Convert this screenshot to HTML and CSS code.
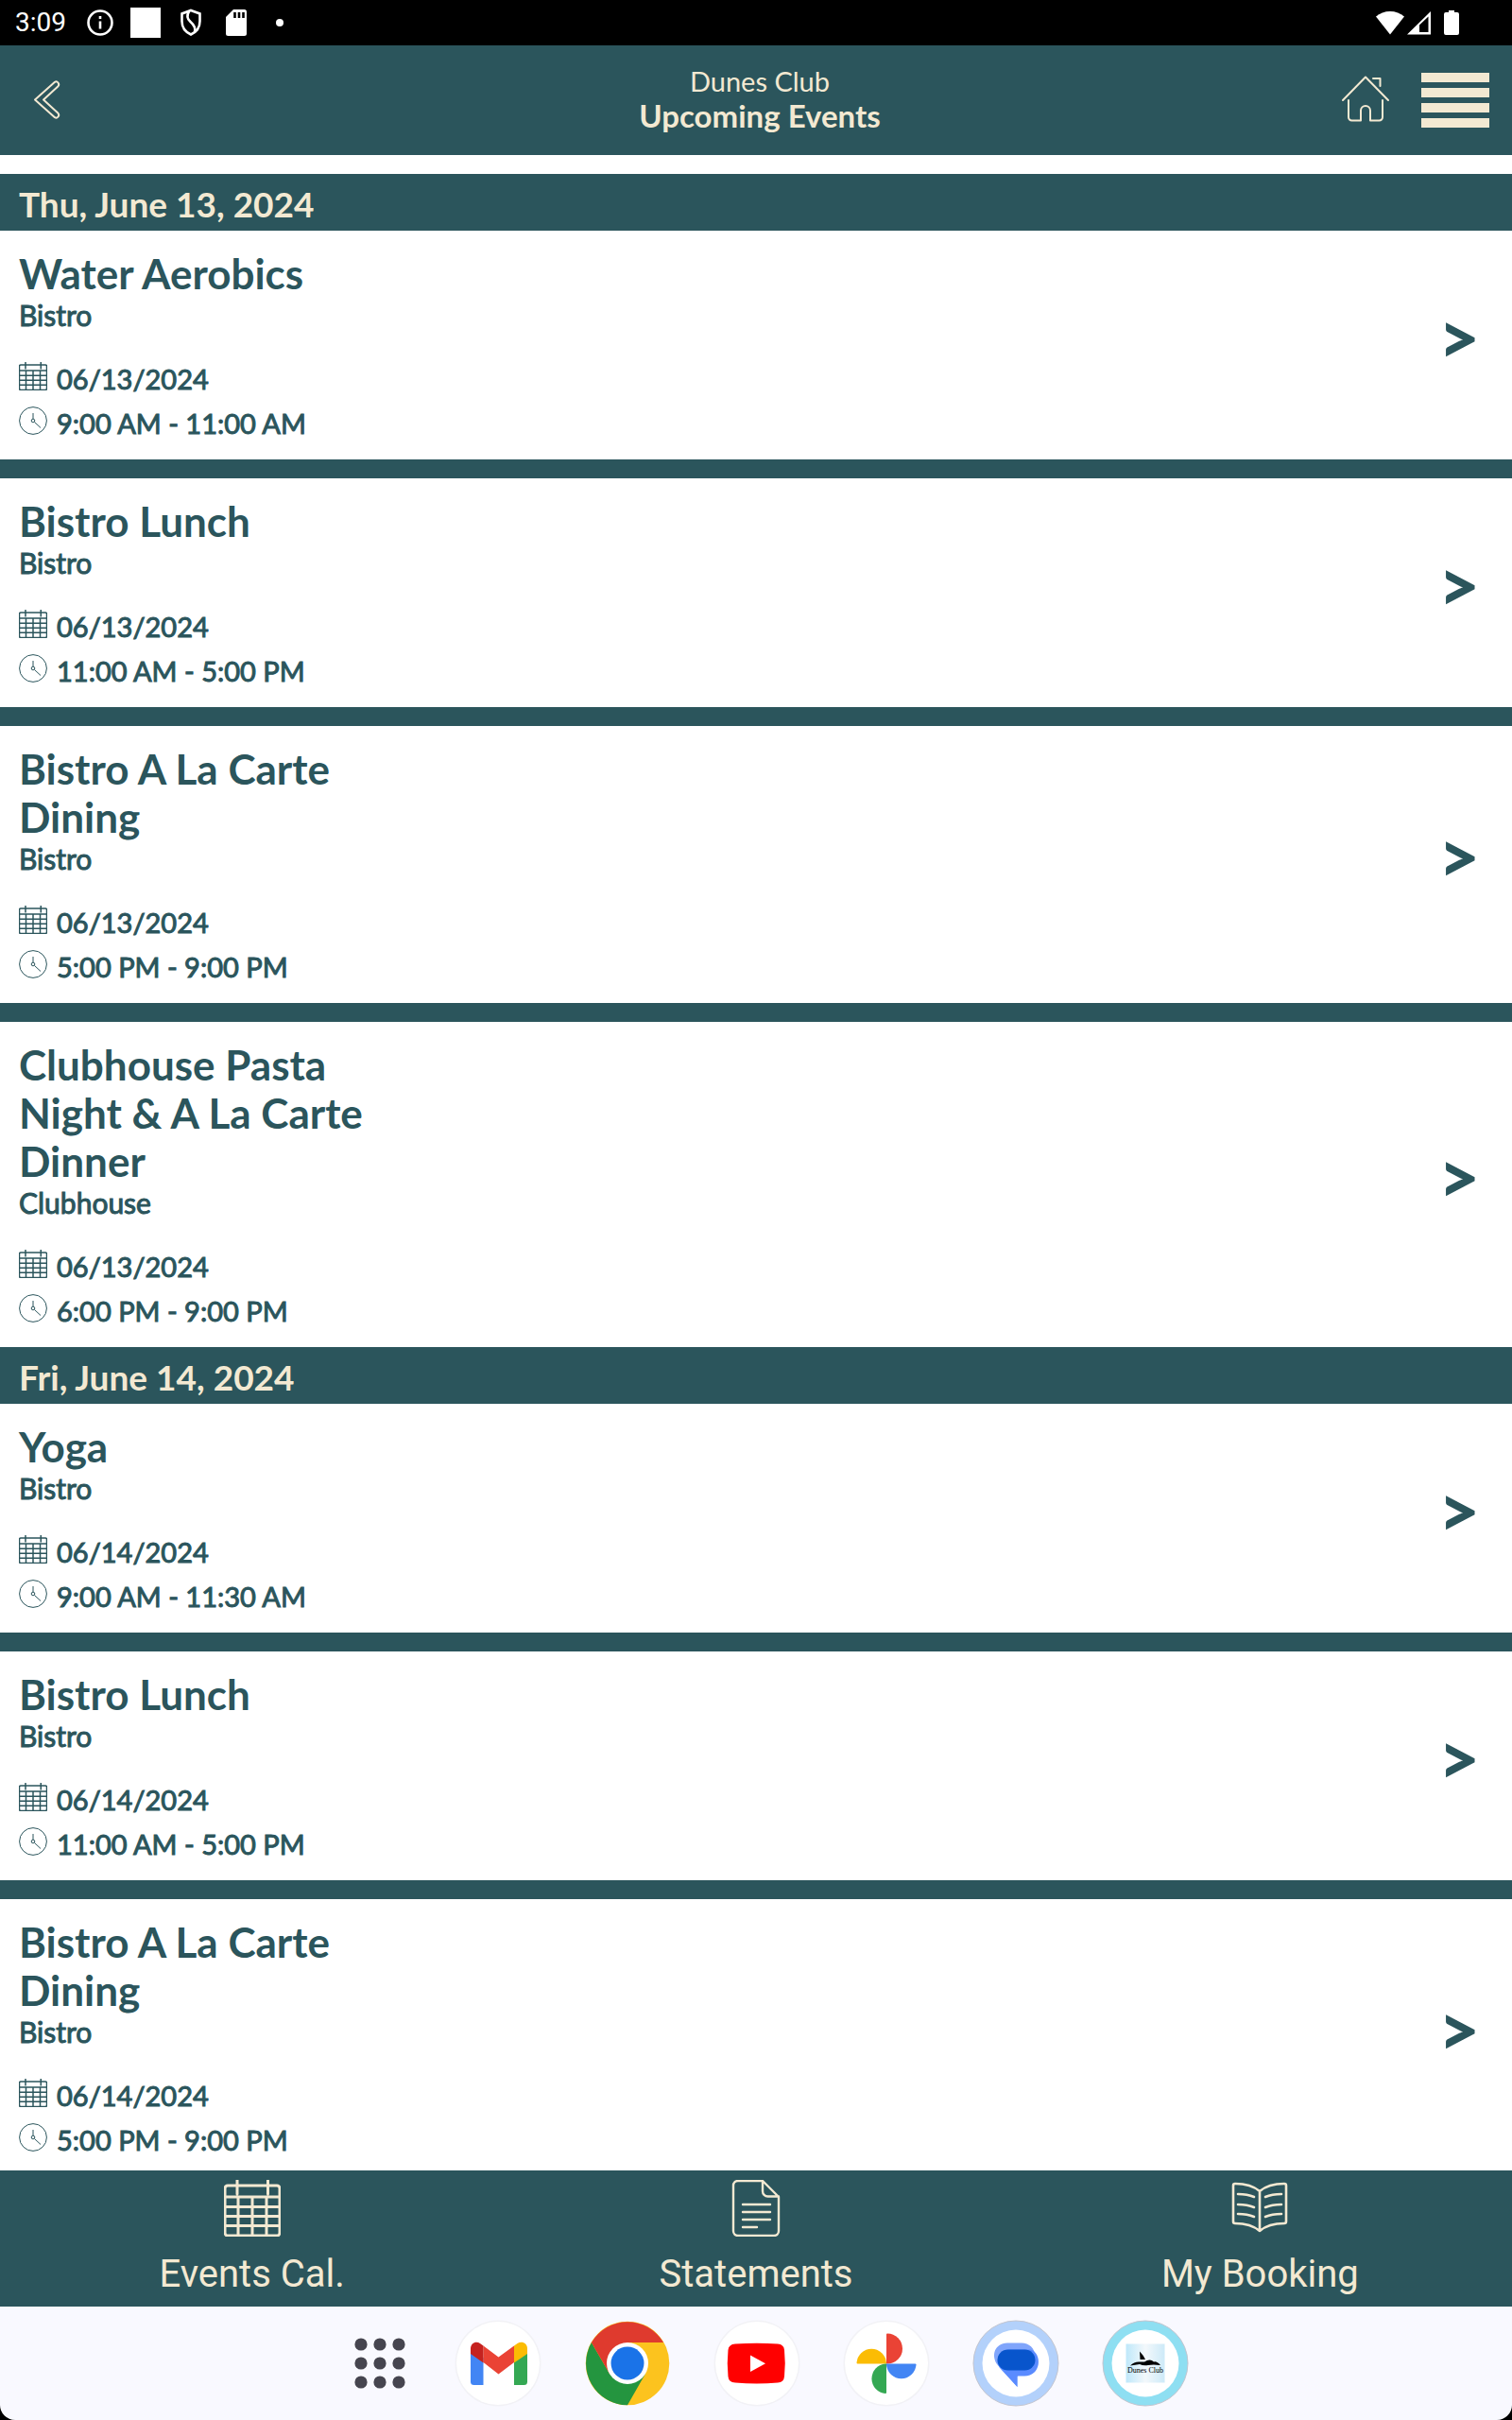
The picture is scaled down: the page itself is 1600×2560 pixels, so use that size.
FILE: index.html
```html
<!DOCTYPE html>
<html lang="en">
<head>
<meta charset="utf-8">
<meta name="viewport" content="width=device-width, initial-scale=1">
<title>Dunes Club - Upcoming Events</title>
<link rel="stylesheet" href="styles.css">
</head>
<body>
<svg class="sprite" aria-hidden="true">
  <symbol id="calendar" viewBox="0 0 60 60">
    <path d="M4 6H56a3 3 0 0 1 3 3V56a3 3 0 0 1-3 3H4a3 3 0 0 1-3-3V9a3 3 0 0 1 3-3zM1 18H59M1 28.500H59M1 38.500H59M1 48.500H59M15 18V59M30 18V59M45 18V59M14 0V15M46.500 0V15"/>
  </symbol>
  <symbol id="clock" viewBox="0 0 30 30">
    <circle cx="15" cy="15" r="14.400"/>
    <circle cx="15" cy="15" r="1.800"/>
    <path d="M15 7v6M16.500 16.500l6.500 6"/>
  </symbol>
</svg>
<div class="app">
  <div class="status">
    <time class="status-time">3:09</time>
    <svg class="status-left" viewBox="0 0 210 32" aria-hidden="true">
      <g fill="none" stroke="#fff" stroke-width="2.600">
        <circle cx="14" cy="16" r="12.500"/>
        <path d="M14 14.500v8M14 9v3"/>
        <path d="M110 3l9.500 3.500v8c0 7-4 11.500-9.500 14-5.500-2.500-9.500-7-9.500-14v-8z"/>
        <path d="M108 4c-3 5-2 8 1.500 11s6 6 4.500 11"/>
      </g>
      <g fill="#fff">
        <path d="M46 0h32v32H46z"/>
        <path d="M155 2h11.500a2.500 2.500 0 0 1 2.500 2.500v23a2.500 2.500 0 0 1-2.500 2.500h-17a2.500 2.500 0 0 1-2.500-2.500V10z"/>
        <circle cx="204" cy="16" r="4"/>
      </g>
      <path d="M156.500 5v6M161 5v6M165.500 5v6" stroke="#000" stroke-width="2.600"/>
    </svg>
    <svg class="status-right" viewBox="0 0 88 32" fill="#fff" aria-hidden="true">
      <path d="M0 9.500C8 2 22 2 30 9.500L15 28.500z"/>
      <path fill-rule="evenodd" d="M33 28.500L58 4V28.500zM46 18.500V26H55.500V9.500z"/>
      <path d="M77 3h6v2h3a2 2 0 0 1 2 2v20a2 2 0 0 1-2 2H74a2 2 0 0 1-2-2V7a2 2 0 0 1 2-2h3z"/>
    </svg>
  </div>

  <header class="header">
    <button class="icon-button back" type="button" aria-label="Back">
      <svg class="back-icon" viewBox="0 0 36 44"><path d="M5 21.500L26 2.800q2-1.200 3.500.7t0 3.700L14 21.500l15.500 14.300q1.500 1.800 0 3.700t-3.500.7z"/></svg>
    </button>
    <div class="heading">
      <p class="club">Dunes Club</p>
      <h1 class="page-title">Upcoming Events</h1>
    </div>
    <div class="header-actions">
      <button class="icon-button" type="button" aria-label="Home">
        <svg class="home-icon" viewBox="0 0 52 52"><path d="M2 26L26 1.500L50 26M8 26V44a3.500 3.500 0 0 0 3.500 3.500H21V37a5 5 0 0 1 10 0V47.500h9.500A3.500 3.500 0 0 0 44 44V26M34 3H41.500V11"/></svg>
      </button>
      <button class="icon-button" type="button" aria-label="Menu">
        <svg class="menu-icon" viewBox="0 0 72 58"><path d="M0 0H72V10H0zM0 16H72V26H0zM0 32H72V42H0zM0 48H72V58H0z"/></svg>
      </button>
    </div>
  </header>

  <main class="schedule">
    <section class="day">
      <h2 class="day-title">Thu, June 13, 2024</h2>
      <a class="event" href="#water-aerobics">
        <div class="event-info">
          <h3 class="event-name">Water Aerobics</h3>
          <p class="venue">Bistro</p>
          <p class="detail"><svg class="detail-icon calendar-icon"><use href="#calendar"/></svg>06/13/2024</p>
          <p class="detail"><svg class="detail-icon"><use href="#clock"/></svg>9:00 AM - 11:00 AM</p>
        </div>
        <span class="arrow">&gt;</span>
      </a>
      <a class="event" href="#bistro-lunch-13">
        <div class="event-info">
          <h3 class="event-name">Bistro Lunch</h3>
          <p class="venue">Bistro</p>
          <p class="detail"><svg class="detail-icon calendar-icon"><use href="#calendar"/></svg>06/13/2024</p>
          <p class="detail"><svg class="detail-icon"><use href="#clock"/></svg>11:00 AM - 5:00 PM</p>
        </div>
        <span class="arrow">&gt;</span>
      </a>
      <a class="event" href="#bistro-dining-13">
        <div class="event-info">
          <h3 class="event-name">Bistro A La Carte Dining</h3>
          <p class="venue">Bistro</p>
          <p class="detail"><svg class="detail-icon calendar-icon"><use href="#calendar"/></svg>06/13/2024</p>
          <p class="detail"><svg class="detail-icon"><use href="#clock"/></svg>5:00 PM - 9:00 PM</p>
        </div>
        <span class="arrow">&gt;</span>
      </a>
      <a class="event" href="#pasta-night">
        <div class="event-info">
          <h3 class="event-name">Clubhouse Pasta Night &amp; A La Carte Dinner</h3>
          <p class="venue">Clubhouse</p>
          <p class="detail"><svg class="detail-icon calendar-icon"><use href="#calendar"/></svg>06/13/2024</p>
          <p class="detail"><svg class="detail-icon"><use href="#clock"/></svg>6:00 PM - 9:00 PM</p>
        </div>
        <span class="arrow">&gt;</span>
      </a>
    </section>
    <section class="day">
      <h2 class="day-title">Fri, June 14, 2024</h2>
      <a class="event" href="#yoga">
        <div class="event-info">
          <h3 class="event-name">Yoga</h3>
          <p class="venue">Bistro</p>
          <p class="detail"><svg class="detail-icon calendar-icon"><use href="#calendar"/></svg>06/14/2024</p>
          <p class="detail"><svg class="detail-icon"><use href="#clock"/></svg>9:00 AM - 11:30 AM</p>
        </div>
        <span class="arrow">&gt;</span>
      </a>
      <a class="event" href="#bistro-lunch-14">
        <div class="event-info">
          <h3 class="event-name">Bistro Lunch</h3>
          <p class="venue">Bistro</p>
          <p class="detail"><svg class="detail-icon calendar-icon"><use href="#calendar"/></svg>06/14/2024</p>
          <p class="detail"><svg class="detail-icon"><use href="#clock"/></svg>11:00 AM - 5:00 PM</p>
        </div>
        <span class="arrow">&gt;</span>
      </a>
      <a class="event" href="#bistro-dining-14">
        <div class="event-info">
          <h3 class="event-name">Bistro A La Carte Dining</h3>
          <p class="venue">Bistro</p>
          <p class="detail"><svg class="detail-icon calendar-icon"><use href="#calendar"/></svg>06/14/2024</p>
          <p class="detail"><svg class="detail-icon"><use href="#clock"/></svg>5:00 PM - 9:00 PM</p>
        </div>
        <span class="arrow">&gt;</span>
      </a>
    </section>
  </main>

  <nav class="tabs" aria-label="Club">
    <a class="tab" href="#calendar-tab">
      <svg class="tab-icon"><use href="#calendar"/></svg>
      Events Cal.
    </a>
    <a class="tab" href="#statements">
      <svg class="tab-icon" viewBox="0 0 60 60"><path stroke-width="2.400" d="M11 1H37L54 18V54a5 5 0 0 1-5 5H11a5 5 0 0 1-5-5V6a5 5 0 0 1 5-5zM37 1V12a5.500 5.500 0 0 0 5.500 5.500H54M16 26H45M16 34H45M16 42H45M16 50H31"/></svg>
      Statements
    </a>
    <a class="tab" href="#my-booking">
      <svg class="tab-icon" viewBox="0 0 60 60"><path stroke-width="2.600" d="M30 12C23 6 13 4 4 4q-2 0-2 2V44q0 2 2 2C14 46 23 48 30 54C37 48 46 46 56 46q2 0 2-2V6q0-2-2-2C47 4 37 6 30 12zV54M7 15q10 0 17 3M7 26q10 0 17 3M7 36q10 0 17 3M53 15q-10 0-17 3M53 26q-10 0-17 3M53 36q-10 0-17 3"/></svg>
      My Booking
    </a>
  </nav>

  <nav class="dock" aria-label="Apps">
    <button class="icon-button all-apps" type="button" aria-label="All apps">
      <svg class="dots-icon" viewBox="0 0 54 54" fill="#46454f"><circle cx="7" cy="7" r="6.600"/><circle cx="27" cy="7" r="6.600"/><circle cx="47" cy="7" r="6.600"/><circle cx="7" cy="27" r="6.600"/><circle cx="27" cy="27" r="6.600"/><circle cx="47" cy="27" r="6.600"/><circle cx="7" cy="47" r="6.600"/><circle cx="27" cy="47" r="6.600"/><circle cx="47" cy="47" r="6.600"/></svg>
    </button>
    <button class="icon-button" type="button" aria-label="Gmail">
      <svg class="app-icon" viewBox="0 0 92 92">
        <circle cx="46" cy="46" r="45.500" fill="#f2f2f6"/><circle cx="46" cy="46" r="44" fill="#fff"/>
        <path d="M17 34V65.500a3.500 3.500 0 0 0 3.500 3.500H30.500V40z" fill="#4285f4"/>
        <path d="M77 34V65.500a3.500 3.500 0 0 1-3.500 3.500H63V40z" fill="#34a853"/>
        <path d="M30.500 27.500L46.500 39.500L63 27.500V45L46.500 57.500L30.500 45z" fill="#ea4335"/>
        <path d="M30.500 27.500L27 25C23 22 17 24.500 17 30.500V36L30.500 45.500z" fill="#c5221f"/>
        <path d="M63 27.500L66.500 25C71 22 77 24.500 77 30.500V36L63 45.500z" fill="#fbbc04"/>
      </svg>
    </button>
    <button class="icon-button" type="button" aria-label="Chrome">
      <svg class="app-icon" viewBox="-2 -2 92 92">
        <circle cx="44" cy="44" r="44.300" fill="#fcc31e"/>
        <path d="M5.900 22A44.300 44.300 0 0 0 44 88.300L63 55L44 44L25 55z" fill="#24953f"/>
        <path d="M5.900 22A44.300 44.300 0 0 1 82.100 22H44V44L25 55z" fill="#df3a2e"/>
        <circle cx="44" cy="44" r="22" fill="#fff"/><circle cx="44" cy="44" r="17.500" fill="#1a73e8"/>
      </svg>
    </button>
    <button class="icon-button" type="button" aria-label="YouTube">
      <svg class="app-icon" viewBox="0 0 92 92">
        <circle cx="46" cy="46" r="45.500" fill="#f2f2f6"/><circle cx="46" cy="46" r="44" fill="#fff"/>
        <path d="M23 25.500Q46 24 68 25.500Q74.500 26 75 32Q76.500 46 75 60Q74.500 66 68 66.500Q46 68.500 23 66.500Q16 66 15.500 60Q14 46 15.500 32Q16 26 23 25.500z" fill="#f00"/>
        <path d="M39 37.500L55 46.200L39 55z" fill="#fff"/>
      </svg>
    </button>
    <button class="icon-button" type="button" aria-label="Photos">
      <svg class="app-icon" viewBox="0 0 92 92">
        <circle cx="46" cy="46" r="45.500" fill="#f2f2f6"/><circle cx="46" cy="46" r="44" fill="#fff"/>
        <path d="M46 46.500V15.500q0-1 1-1A16 16 0 0 1 47 46.500z" fill="#ea4335"/>
        <path d="M46 46.500H15.500q-1 0-1-1A15.800 16 0 0 1 46 45.500z" fill="#fbbc04"/>
        <path d="M46 46.500H76.500q1 0 1 1A15.800 16 0 0 1 46 47.500z" fill="#4285f4"/>
        <path d="M46 46.500V77q0 1-1 1A15.800 15.800 0 0 1 45 46.500z" fill="#34a853"/>
      </svg>
    </button>
    <button class="icon-button" type="button" aria-label="Messages">
      <svg class="app-icon" viewBox="0 0 92 92">
        <circle cx="46" cy="46" r="45" fill="#b3d1fb" stroke="#c3c5cf"/><circle cx="46" cy="46" r="35.500" fill="#fff"/>
        <path d="M37 24.500H52C60 24.500 66 30 66.500 38.500L47.500 60V71L26 47C20 38 23 25 37 24.500z" fill="#80a5fb"/>
        <path d="M40 31.500H62C74 36 73 59.500 55 59.500H47.500V71L30 52C23 44 28 31.500 40 31.500z" fill="#5a8bff"/>
        <rect x="26.500" y="31.500" width="40" height="22" rx="11" fill="#0855cc"/>
      </svg>
    </button>
    <button class="icon-button" type="button" aria-label="Dunes Club">
      <svg class="app-icon" viewBox="0 0 92 92">
        <defs><linearGradient id="sky"><stop offset="0" stop-color="#bfe8fa"/><stop offset=".5" stop-color="#f3f8fb"/><stop offset="1" stop-color="#cdeaf8"/></linearGradient></defs>
        <circle cx="46" cy="46" r="45" fill="#8edff2" stroke="#c3c5cf"/><circle cx="46" cy="46" r="35.500" fill="#fff"/>
        <path d="M25.500 25.500h41v41h-41z" fill="url(#sky)"/>
        <path d="M40 33.500q4 4 6 8.500h-5.500zM30 48.500q4-4 9-4h6q6-4 10 0q3-1 7 3.500q-8-1-13 0t-9-1z"/>
        <text class="logo-text" x="46" y="56" text-anchor="middle">Dunes Club</text>
      </svg>
    </button>
  </nav>
</div>
</body>
</html>
```
FILE: styles.css
```css
:root {
  --teal: #2b555c;
  --cream: #f3e9d2;
}

* { box-sizing: border-box; }

body {
  margin: 0;
  background: #000;
  color: var(--teal);
  font-family: Lato, "Liberation Sans", sans-serif;
}

h1, h2, h3, p { margin: 0; }

a { color: inherit; text-decoration: none; }

svg { display: block; }

.sprite { position: absolute; width: 0; height: 0; }

.app {
  display: flex;
  flex-direction: column;
  height: 100vh;
}

.icon-button {
  padding: 0;
  border: 0;
  background: none;
  cursor: pointer;
}

/* System status bar */
.status {
  display: flex;
  flex: none;
  align-items: center;
  height: 48px;
  padding: 0 56px 0 16px;
  background: #000;
  color: #fff;
}

.status-time {
  width: 76px;
  font: 28px/48px Roboto, sans-serif;
}

.status-left { width: 210px; height: 32px; }
.status-right { width: 88px; height: 32px; margin-left: auto; }

/* Page header */
.header {
  display: grid;
  flex: none;
  grid-template-columns: 1fr auto 1fr;
  align-items: center;
  height: 116px;
  padding: 0 24px 0 32px;
  background: var(--teal);
  color: var(--cream);
}

.back { justify-self: start; }

.back-icon, .home-icon {
  fill: none;
  stroke: var(--cream);
  stroke-width: 2;
  stroke-linecap: round;
  stroke-linejoin: round;
}

.back-icon { width: 36px; height: 44px; }
.home-icon { width: 52px; height: 52px; }
.menu-icon { width: 72px; height: 58px; fill: var(--cream); }

.heading {
  padding-bottom: 4px;
  text-align: center;
}

.club { font-size: 29px; line-height: 37px; }
.page-title { font-size: 33px; line-height: 37px; }

.header-actions {
  display: flex;
  align-items: center;
  justify-content: flex-end;
  gap: 33px;
}

/* Events list */
.schedule {
  flex: 1;
  min-height: 0;
  padding-top: 20px;
  overflow-y: auto;
  scrollbar-width: none;
  background: #fff;
}

.day-title {
  padding: 4px 20px 0;
  background: var(--teal);
  color: var(--cream);
  font-size: 37px;
  line-height: 56px;
}

.event {
  display: flex;
  align-items: center;
  justify-content: space-between;
  padding: 20px 34px 15px 20px;
}

.event + .event { border-top: 20px solid var(--teal); }

.event-info { width: 380px; }
.event-name { font-size: 44px; line-height: 51px; }

/* The thin stroke gives the regular weight a medium look */
.venue, .detail {
  font-size: 29px;
  -webkit-text-stroke: 1px currentColor;
}

.venue {
  margin-bottom: 26px;
  font-size: 30px;
  line-height: 36px;
}

.detail {
  display: flex;
  align-items: center;
  gap: 10px;
  line-height: 47px;
}

.detail-icon {
  width: 30px;
  height: 30px;
  margin-bottom: 5px;
  fill: none;
  stroke: var(--teal);
  stroke-width: 1;
}

.calendar-icon { stroke-width: 3; }

.arrow {
  margin-bottom: 24px;
  font-size: 76px;
  font-weight: 900;
  line-height: 76px;
}

/* Club tabs */
.tabs {
  display: grid;
  flex: none;
  grid-template-columns: repeat(3, 1fr);
  height: 144px;
  background: var(--teal);
  color: var(--cream);
}

.tab {
  display: flex;
  flex-direction: column;
  align-items: center;
  gap: 17px;
  padding-top: 10px;
  font: 40px/46px Roboto, sans-serif;
}

.tab-icon {
  width: 60px;
  height: 60px;
  fill: none;
  stroke: var(--cream);
  stroke-width: 3;
  stroke-linecap: round;
  stroke-linejoin: round;
}

/* System app dock */
.dock {
  display: flex;
  flex: none;
  align-items: center;
  justify-content: center;
  gap: 45px;
  height: 120px;
  border-radius: 0 0 16px 16px;
  background: #f9f9ff;
}

.all-apps { padding: 0 7px 0 33px; }
.dots-icon { width: 54px; height: 54px; }
.app-icon { width: 92px; height: 92px; }
.logo-text { font: 8px "Liberation Serif", serif; }
```
